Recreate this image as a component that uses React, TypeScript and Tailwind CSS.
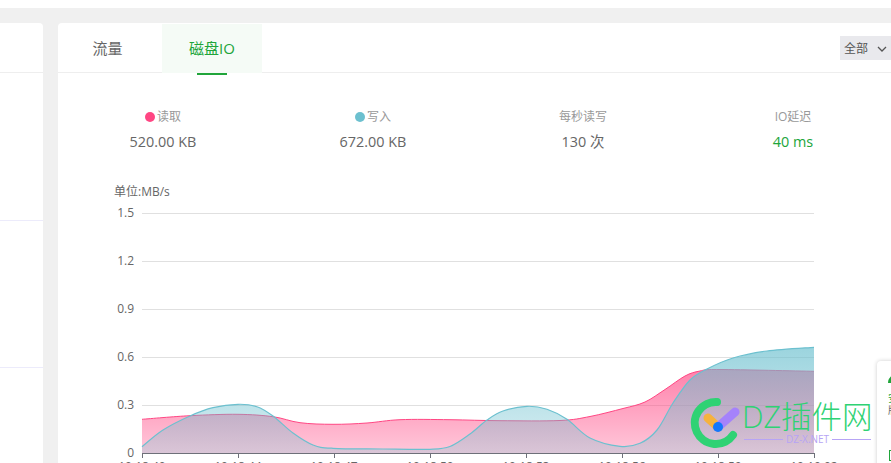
const FONT = '"Open Sans", "Noto Sans CJK SC", sans-serif';

type Pt = [number, number];

const readPts: Pt[] = [
  [142, 419.3], [190, 415.7], [238, 414.3], [273, 416.7], [300, 422.7], [333, 424.3], [367, 423],
  [400, 419.7], [450, 419.7], [500, 420.7], [560, 420.5], [590, 416.5], [623, 408.5], [645, 402],
  [665, 389.5], [685, 376], [700, 371], [720, 369.5], [814, 371.3],
];

const writePts: Pt[] = [
  [142, 446.7], [163, 430], [190, 416], [213, 407.7], [238, 404.3], [257, 406.7], [273, 416],
  [293, 433], [313, 445], [333, 448.3], [383, 449], [430, 449.3], [450, 446.5], [470, 434],
  [487, 420], [503, 411], [527, 406.3], [547, 409.3], [567, 419.3], [590, 438], [620, 446.3],
  [640, 443.3], [657, 430], [673, 403], [690, 380], [707, 369], [733, 358], [767, 351], [814, 347.3],
];

// catmull-rom through the sampled points
function smooth(pts: Pt[]) {
  let d = `M${pts[0][0]} ${pts[0][1]}`;
  for (let i = 0; i < pts.length - 1; i++) {
    const p0 = pts[Math.max(i - 1, 0)];
    const p1 = pts[i];
    const p2 = pts[i + 1];
    const p3 = pts[Math.min(i + 2, pts.length - 1)];
    const c1x = p1[0] + (p2[0] - p0[0]) / 6;
    const c1y = p1[1] + (p2[1] - p0[1]) / 6;
    const c2x = p2[0] - (p3[0] - p1[0]) / 6;
    const c2y = p2[1] - (p3[1] - p1[1]) / 6;
    d += ` C${c1x.toFixed(1)} ${c1y.toFixed(1)} ${c2x.toFixed(1)} ${c2y.toFixed(1)} ${p2[0]} ${p2[1]}`;
  }
  return d;
}

const yLabels = [
  { y: 213, t: '1.5' },
  { y: 261, t: '1.2' },
  { y: 309, t: '0.9' },
  { y: 357, t: '0.6' },
  { y: 405, t: '0.3' },
  { y: 453, t: '0' },
];

const xLabels = ['10:18:40', '10:18:44', '10:18:47', '10:18:50', '10:18:53', '10:18:56', '10:18:59', '10:19:02'];

function Chart() {
  const read = smooth(readPts);
  const write = smooth(writePts);
  // svg coordinates are page coordinates shifted by the card origin
  return (
    <svg width="833" height="290" viewBox="58 173 833 290" className="block">
      <defs>
        <linearGradient id="readFill" gradientUnits="userSpaceOnUse" x1="0" y1="369" x2="0" y2="453">
          <stop offset="0" stopColor="#ff4683" stopOpacity="0.68" />
          <stop offset="1" stopColor="#ff4683" stopOpacity="0.3" />
        </linearGradient>
        <linearGradient id="writeFill" gradientUnits="userSpaceOnUse" x1="0" y1="347" x2="0" y2="453">
          <stop offset="0" stopColor="#6cc0cf" stopOpacity="0.68" />
          <stop offset="1" stopColor="#6cc0cf" stopOpacity="0.25" />
        </linearGradient>
      </defs>
      <text x="114" y="196" fontSize="12" fill="#666">单位:MB/s</text>
      {yLabels.map((l) => (
        <g key={l.t}>
          {l.t !== '0' && <line x1="142" x2="814" y1={l.y + 0.5} y2={l.y + 0.5} stroke="#e0e0e0" />}
          <text x="134" y={l.y + 4} fontSize="12" textAnchor="end" fill="#666">{l.t}</text>
        </g>
      ))}
      <path d={`${read} L814 453 L142 453 Z`} fill="url(#readFill)" />
      <path d={read} fill="none" stroke="#ff4683" />
      <path d={`${write} L814 453 L142 453 Z`} fill="url(#writeFill)" />
      <path d={write} fill="none" stroke="#6cc0cf" strokeWidth="1.2" />
      <line x1="142" x2="814" y1="453.5" y2="453.5" stroke="#6e7079" />
      {xLabels.map((t, i) => (
        <g key={t}>
          <line x1={142.5 + i * 96} x2={142.5 + i * 96} y1="453" y2="458" stroke="#6e7079" />
          <text x={142 + i * 96} y="470.5" fontSize="12" textAnchor="middle" fill="#666">{t}</text>
        </g>
      ))}
    </svg>
  );
}

function Stat({ label, value, dot, green }: { label: string; value: string; dot?: string; green?: boolean }) {
  return (
    <div className="flex flex-col items-center">
      <div className="flex items-center h-[20px] text-[12px] text-[#999]">
        {dot && <span className="w-[10px] h-[10px] rounded-full mr-[2px]" style={{ backgroundColor: dot }} />}
        {label}
      </div>
      <div className={`h-[30px] leading-[30px] text-[14.4px] ${green ? 'text-[#20a53a]' : 'text-[#666]'}`}>{value}</div>
    </div>
  );
}

export default function App() {
  return (
    <div className="relative w-[891px] h-[463px] overflow-hidden bg-[#f0f0f0]" style={{ fontFamily: FONT }}>
      <div className="h-2 bg-white" />
      <div className="flex gap-[15px] pt-[15px]">
        <div className="w-[43px] h-[500px] bg-white rounded-tr-[4px] flex flex-col shrink-0">
          <div className="h-[50px] shrink-0 border-b border-[#eeeeee]" />
          <div className="h-[148px] shrink-0 border-b border-[#ecebfb]" />
          <div className="h-[147px] shrink-0 border-b border-[#ecebfb]" />
        </div>
        <div className="flex-1 min-w-0 h-[500px] bg-white rounded-tl-[4px]">
          <div className="relative flex h-[50px] border-b border-[#eeeeee] text-[15px]">
            <div className="w-[104px] flex items-center justify-center text-[#666] pt-[1px] pr-[5px]">流量</div>
            <div className="relative w-[100px] h-[49px] mt-px flex items-center justify-center bg-[#f5fbf6] text-[#20a53a]">
              磁盘IO
              <span className="absolute left-[35px] bottom-[-2px] w-[30px] h-[2px] bg-[#20a53a]" />
            </div>
            <div className="ml-auto mt-[13px] w-[51px] h-[24px] bg-[#e9e9ed] flex items-center pl-[4px] pt-[2px] text-[12px] text-[#555]">
              全部
              <svg width="10" height="6" viewBox="0 0 10 6" className="ml-[9px]" fill="none" stroke="#555" strokeWidth="1.3">
                <path d="M1 1l4 4 4-4" />
              </svg>
            </div>
          </div>
          <div className="grid grid-cols-4 w-[840px] pt-[34px] h-[100px]">
            <Stat label="读取" value="520.00 KB" dot="#ff4683" />
            <Stat label="写入" value="672.00 KB" dot="#6cc0cf" />
            <Stat label="每秒读写" value="130 次" />
            <Stat label="IO延迟" value="40 ms" green />
          </div>
          <Chart />
        </div>
      </div>

      {/* floating widget, cut off by the window */}
      <div className="absolute left-[877px] top-[361px] w-[40px] h-[110px] bg-white rounded-tl-[4px] shadow-[0_0_4px_rgba(0,0,0,0.2)]">
        <svg width="8" height="8" viewBox="0 0 8 8" className="absolute left-[11px] top-[14px]">
          <path d="M4 0C6 2 8 4 8 8H0C0 4 2 3 4 0Z" fill="#20a53a" />
        </svg>
        <div className="absolute left-[11px] top-[31px] text-[10px] leading-[13px] text-[#20a53a]">安</div>
        <div className="absolute left-[11px] top-[43px] text-[10px] leading-[13px] text-[#666]">版</div>
        <div className="absolute left-[12px] top-[89px] w-[8px] h-[11px] border border-[#20a53a]" />
      </div>

      {/* DZ watermark */}
      <svg width="50" height="54" viewBox="0 0 50 54" className="absolute left-[690px] top-[396px]">
        <path d="M27 6A21 21 0 1 0 43 39" fill="none" stroke="#2fd274" strokeWidth="8" strokeLinecap="round" />
        <path d="M18 22L28 31" fill="none" stroke="#f6b23d" strokeWidth="9" strokeLinecap="round" />
        <path d="M28 31L45 16" fill="none" stroke="#a582fb" strokeWidth="9" strokeLinecap="round" />
        <circle cx="28" cy="31" r="5" fill="#1477fb" />
      </svg>
      <div className="absolute left-[742px] top-[396px] text-[30.5px] leading-[40px] font-light text-[#2fd274] whitespace-nowrap">DZ插件网</div>
      <div className="absolute left-[744px] top-[432px] w-[127px] flex items-center gap-[3px] text-[#b7a4f5] text-[10px] leading-[14px]">
        <span className="flex-1 h-px bg-[#b7a4f5]" />
        DZ-X.NET
        <span className="flex-1 h-px bg-[#b7a4f5]" />
      </div>
    </div>
  );
}
